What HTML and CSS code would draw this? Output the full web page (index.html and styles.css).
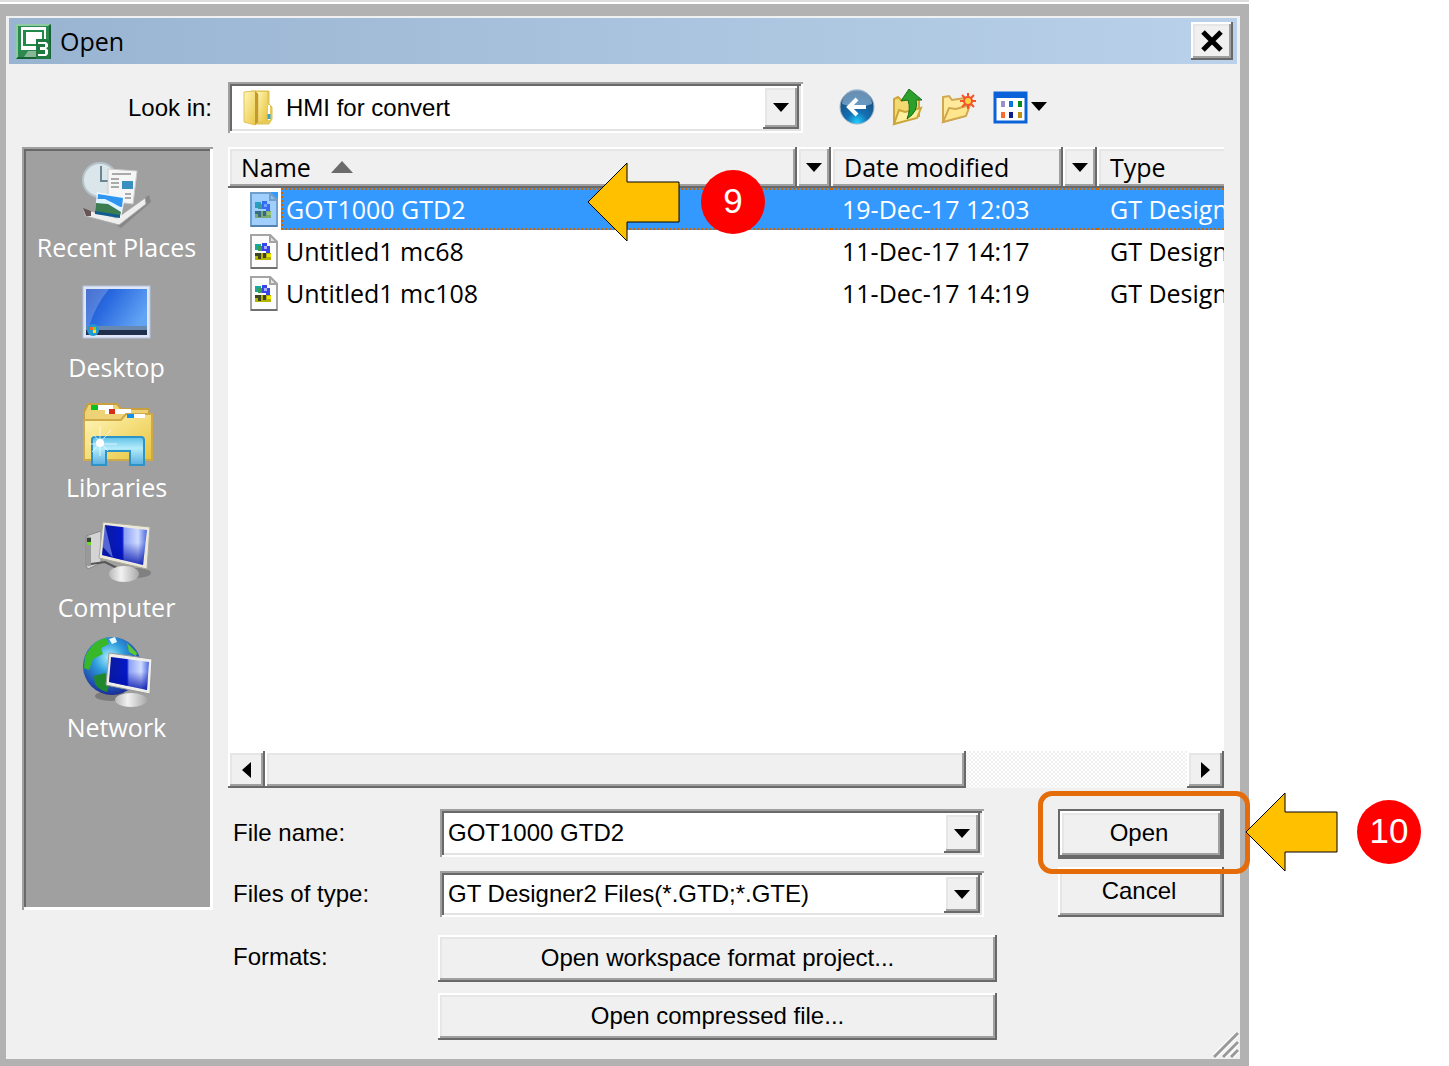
FILE: index.html
```html
<!DOCTYPE html>
<html lang="en">
<head>
<meta charset="utf-8">
<meta name="viewport" content="width=device-width, initial-scale=1">
<title>Open</title>
<link rel="stylesheet" href="styles.css">
</head>
<body>
<svg class="defs" aria-hidden="true">
  <defs>
    <linearGradient id="folder" x1="0" y1="0" x2="1" y2="1"><stop offset="0" stop-color="#fff6b8"/><stop offset="1" stop-color="#e8c33c"/></linearGradient>
    <linearGradient id="screen" x1="0" y1="0" x2="1" y2="0"><stop offset="0" stop-color="#0a1a9c"/><stop offset=".45" stop-color="#0418c8"/><stop offset=".5" stop-color="#8ca0f4"/><stop offset=".8" stop-color="#d0dcff"/><stop offset="1" stop-color="#4a68e0"/></linearGradient>
    <linearGradient id="shade" x1="0" y1="0" x2="0" y2="1"><stop offset=".45" stop-color="#0010b0" stop-opacity="0"/><stop offset="1" stop-color="#0010a8" stop-opacity=".85"/></linearGradient>
    <linearGradient id="desk" x1="0" y1="0" x2="1" y2=".5"><stop offset="0" stop-color="#1c4cc0"/><stop offset=".4" stop-color="#2a6ae0"/><stop offset="1" stop-color="#62a4f4"/></linearGradient>
    <linearGradient id="glass" x1="0" y1="0" x2="0" y2="1"><stop offset="0" stop-color="#5ec0e8"/><stop offset=".4" stop-color="#b4ecfa"/><stop offset="1" stop-color="#5aaee0"/></linearGradient>
    <radialGradient id="globe" cx=".45" cy=".35" r=".65"><stop offset="0" stop-color="#a8f0ff"/><stop offset=".4" stop-color="#2e9cdc"/><stop offset="1" stop-color="#1a2c98"/></radialGradient>
    <radialGradient id="orb" cx=".5" cy=".95" r=".9"><stop offset="0" stop-color="#20d0ff"/><stop offset=".35" stop-color="#1470b4"/><stop offset="1" stop-color="#1d4670"/></radialGradient>
    <linearGradient id="base" x1="0" y1="0" x2="1" y2="0"><stop offset="0" stop-color="#b8b8b8"/><stop offset=".4" stop-color="#f2f2f2"/><stop offset="1" stop-color="#a8a8a8"/></linearGradient>
    <symbol id="file" viewBox="0 0 28 35">
      <path d="M1 1H20L27 8V34H1Z" fill="#fcfcfc" stroke="#a4a4a4" stroke-width="2"/>
      <path d="M1 34H27" stroke="#707070" stroke-width="2"/>
      <path d="M20 1V8H27Z" fill="#e4e4e4" stroke="#a4a4a4" stroke-width="2"/>
      <path d="M5 10H11V16H5Z" fill="#14a8a0"/><path d="M8 12H14V17H8Z" fill="#3a9c50"/>
      <path d="M12 9H17V12H20V21H16V17H12Z" fill="#3a44e8"/><path d="M14 12H17V15H14Z" fill="#a0b0ff"/>
      <path d="M5 19H21V26H5Z" fill="#b4b400"/><path d="M5 19H11V25H8V22H5Z" fill="#3c4420"/><path d="M13 19H16V24H13Z" fill="#3c3c3c"/><path d="M17 20H21V23H17Z" fill="#e8e800"/>
    </symbol>
    <symbol id="down" viewBox="0 0 16 9"><path d="M0 0H16L8 9Z" fill="#000"/></symbol>
  </defs>
</svg>

<main class="window">
  <header class="titlebar">
    <svg class="app-icon" viewBox="0 0 35 35" aria-hidden="true">
      <rect width="35" height="35" rx="2" fill="#2c8a50"/><path d="M0 0H34L32 2H2V33L0 35Z" fill="#8fcca4"/><path d="M35 0V35H0L2 33H33V2Z" fill="#176334"/>
      <path d="M5 3H30V17H22V26H5Z" fill="#fff"/><path d="M7 6H28V15H22V22H7Z" fill="#1f8a4a"/><path d="M10 8H26V16H21V20H10Z" fill="#fff"/>
      <path d="M12 27H20V33H8Z" fill="#86b898"/>
      <path d="M20 15H30L34 18V35H20Z" fill="#1f7a42"/>
      <path d="M22 18H30L32 20V23L30 24L32 26V30L30 32H22V30H29V26H24V23H29V20H22Z" fill="#fff"/>
    </svg>
    <h1 class="title">Open</h1>
    <button class="btn close" type="button" aria-label="Close"><svg viewBox="0 0 22 22" width="22" height="22"><path d="M2 2L20 20M20 2L2 20" stroke="#000" stroke-width="5"/></svg></button>
  </header>

  <div class="lookin">
    <label class="lookin-label" for="folder-select">Look in:</label>
    <div class="combo combo-look">
      <svg class="folder-icon" viewBox="0 0 30 36" aria-hidden="true">
        <path d="M8 1H26V14L29 17V29L26 34H10Z" fill="#e6cb5a" stroke="#dcc050"/><path d="M14 2H24V31H14Z" fill="url(#folder)"/>
        <path d="M1 2L12 1L15 4V32L12 35L1 32Z" fill="url(#folder)" stroke="#e0c45c"/><path d="M12 1L15 4V32L12 35Z" fill="#c39a32"/>
        <path d="M26 15V30" stroke="#fff" stroke-width="2"/><path d="M26 24V29" stroke="#38a4c8" stroke-width="3"/>
      </svg>
      <select class="field" id="folder-select"><option>HMI for convert</option></select>
      <span class="btn drop" aria-hidden="true"><svg class="down"><use href="#down"/></svg></span>
    </div>
    <div class="tools">
      <button class="tool" type="button" aria-label="Back"><svg width="36" height="38" viewBox="0 0 36 38">
        <circle cx="18" cy="18" r="17" fill="url(#orb)" stroke="#9fb4c6"/><path d="M3 15A15 15 0 0 1 33 15Q18 21 3 15Z" fill="#9cc0de" opacity=".6"/>
        <path d="M27 18H12M18 10L10 18L18 26" fill="none" stroke="#fff" stroke-width="4"/></svg></button>
      <button class="tool" type="button" aria-label="Up one level"><svg width="32" height="38" viewBox="0 0 32 38">
        <path d="M2 35V10L6 8L9 11L27 9V27Z" fill="#f4d870" stroke="#cda63a" stroke-width="2"/><path d="M2 35L7 21L13 23L29 19L25 29Z" fill="#fff0a0" stroke="#cda63a" stroke-width="2"/>
        <path d="M17 0L30 11H24Q27 22 15 30Q19 20 16 11L9 12Z" fill="#2ca02c" stroke="#167016"/></svg></button>
      <button class="tool" type="button" aria-label="New folder"><svg width="35" height="38" viewBox="0 0 35 38">
        <path d="M2 33V8L8 7L11 11L24 9V27Z" fill="#ffe99a" stroke="#d0a850" stroke-width="2"/><path d="M2 33L8 19L15 20L29 16L25 27Z" fill="#ffe68c" stroke="#d0a850" stroke-width="2"/>
        <path d="M27 4V20M19 12H35M21 6L33 18M33 6L21 18" stroke="#f4512c" stroke-width="2"/><circle cx="27" cy="12" r="4" fill="#ffd040" stroke="#f4512c" stroke-width="2"/></svg></button>
      <button class="tool" type="button" aria-label="View menu"><svg width="56" height="38" viewBox="0 0 56 38">
        <rect x="2" y="4" width="31" height="29" fill="#fff" stroke="#0a62d8" stroke-width="3"/><path d="M1 3H34V9H1Z" fill="#0a62d8"/>
        <path d="M8 12H12V18H8Z" fill="#9a90c8"/><path d="M16 12H20V18H16Z" fill="#0a74e0"/><path d="M25 12H29V18H25Z" fill="#0a8a1c"/><path d="M8 23H12V29H8Z" fill="#ff6a30"/><path d="M16 23H20V29H16Z" fill="#0a1e90"/><path d="M25 23H29V29H25Z" fill="#c09010"/>
        <path d="M38 13H54L46 22Z" fill="#000"/></svg></button>
    </div>
  </div>

  <div class="main">
    <nav class="places" aria-label="Places">
      <a class="place" href="#recent"><svg class="place-icon" viewBox="0 0 72 76" aria-hidden="true">
        <path d="M30 66L68 39L70 46L40 72Z" fill="#777" opacity=".6"/>
        <circle cx="19" cy="24" r="17" fill="#dbe6ea" stroke="#b4c4cc" stroke-width="2"/><path d="M20 10V25H28" stroke="#6a8494" stroke-width="2" fill="none"/>
        <path d="M27 13L56 15L52 48L27 45Z" fill="#f6f6f6" stroke="#ccc"/><path d="M31 18H50M30 23H38M30 27H38M30 31H38M44 38H50M44 42H50" stroke="#aaa" stroke-width="2"/><path d="M41 25H52V33H41Z" fill="#3a90c0"/>
        <path d="M2 53L36 62L64 42L65 48L38 69L4 60Z" fill="#eee" stroke="#aaa"/><path d="M2 52L10 55V60H5Z" fill="#655"/>
        <path d="M16 36L44 41L40 62L14 57Z" fill="#eef6ff"/><path d="M17 38L42 42L41 51L16 49Z" fill="#2e96f0"/><path d="M16 43L24 43L32 47L41 52V55L15 54Z" fill="#e0f4ff"/><path d="M15 47L27 48L40 56L39 60L14 56Z" fill="#3c7c50"/><path d="M14 55L39 59V62L14 58Z" fill="#105c90"/>
      </svg><span>Recent Places</span></a>
      <a class="place" href="#desktop"><svg class="place-icon" viewBox="0 0 72 76" aria-hidden="true">
        <rect x="2" y="10" width="67" height="52" fill="#dfe6f6" stroke="#b4c4e4"/><rect x="5" y="13" width="61" height="46" fill="url(#desk)"/><path d="M5 13H28Q14 30 8 51H5Z" fill="#fff" opacity=".2"/>
        <path d="M5 50H66V59H5Z" fill="#20304c"/><path d="M5 50H66V54H5Z" fill="#6888b0"/><circle cx="12" cy="54" r="6" fill="#2498d0"/><path d="M9 51H12V54H9Z" fill="#f46820"/><path d="M12 51H15V54H12Z" fill="#80d020"/><path d="M12 54H15V57H12Z" fill="#ffe020"/>
      </svg><span>Desktop</span></a>
      <a class="place" href="#libraries"><svg class="place-icon" viewBox="0 0 72 76" aria-hidden="true">
        <path d="M3 16L7 8H36L40 13H68V64H3Z" fill="#eed376" stroke="#c8a040" stroke-width="2"/><path d="M10 9H32V14H10Z" fill="#fff"/><path d="M10 9H17V14H10Z" fill="#08c020"/><path d="M24 13H50V18H24Z" fill="#fff"/><path d="M28 13H34V18H28Z" fill="#d43018"/>
        <path d="M3 24H40L45 18H71V64H3Z" fill="url(#folder)" stroke="#d0aa48" stroke-width="2"/><path d="M46 18H64V22H46Z" fill="#fff"/><path d="M46 18H53V22H46Z" fill="#1090f0"/>
        <path d="M11 44Q11 41 14 41H60Q63 41 63 44V69H49V55H25V69H11Z" fill="url(#glass)" stroke="#2e94c8" stroke-width="2"/><path d="M19 30V60M8 48H36M11 56L30 34M12 38L27 55" stroke="#fff" opacity=".7"/><circle cx="19" cy="47" r="4" fill="#fff"/>
      </svg><span>Libraries</span></a>
      <a class="place" href="#computer"><svg class="place-icon" viewBox="0 0 72 76" aria-hidden="true">
        <path d="M5 20L20 15V47L7 53L5 50Z" fill="#d4d4d4" stroke="#888"/><path d="M5 20L10 21V50H5Z" fill="#999"/><path d="M6 22H10V26H6Z" fill="#343"/><path d="M6 26H10V29H6Z" fill="#6bdc1c"/><path d="M10 48L24 46L36 52" fill="none" stroke="#555" stroke-width="2"/>
        <ellipse cx="55" cy="57" rx="15" ry="5" fill="#606060" opacity=".5"/><ellipse cx="43" cy="58" rx="15" ry="8" fill="url(#base)"/>
        <path d="M22 6L69 11L66 53L18 42Z" fill="#ece9dc" stroke="#aaa898"/><path d="M24 9L66 14L62 49L21 39Z" fill="url(#screen)"/><path d="M24 9L66 14L62 49L21 39Z" fill="url(#shade)"/><path d="M24 9L21 30L32 42Z" fill="#a0b4ff" opacity=".5"/>
      </svg><span>Computer</span></a>
      <a class="place" href="#network"><svg class="place-icon" viewBox="0 0 72 76" aria-hidden="true">
        <ellipse cx="30" cy="60" rx="16" ry="5" fill="#555" opacity=".5"/><circle cx="31" cy="30" r="29" fill="url(#globe)"/>
        <path d="M4 21Q12 4 25 2L28 8L20 12L22 18L12 23L8 34L3 32Z" fill="#38b828"/><path d="M13 40L24 37L30 44L26 56Q18 54 14 48Z" fill="#20882c"/><path d="M46 7L56 17L55 20L48 16Z" fill="#5cc830"/><path d="M28 3L34 1L36 6L31 8Z" fill="#e8f8ff"/>
        <ellipse cx="50" cy="64" rx="16" ry="7" fill="url(#base)"/>
        <path d="M28 17L71 23L69 58L25 49Z" fill="#eeeeea" stroke="#999"/><path d="M30 21L68 26L66 54L28 46Z" fill="url(#screen)"/><path d="M30 21L68 26L66 54L28 46Z" fill="url(#shade)"/>
      </svg><span>Network</span></a>
    </nav>

    <div class="content">
      <section class="list" aria-label="Files">
        <div class="list-view">
          <table class="files">
            <colgroup><col class="c-name"><col class="c-date"><col class="c-type"></colgroup>
            <thead>
              <tr>
                <th><div class="head"><button class="btn head-btn" type="button">Name <svg class="sort" viewBox="0 0 22 12"><path d="M11 0L22 12H0Z" fill="#6b6b6b"/></svg></button><button class="btn head-drop" type="button" aria-label="Name filter"><svg class="down"><use href="#down"/></svg></button></div></th>
                <th><div class="head"><button class="btn head-btn" type="button">Date modified</button><button class="btn head-drop" type="button" aria-label="Date filter"><svg class="down"><use href="#down"/></svg></button></div></th>
                <th><div class="head"><button class="btn head-btn head-last" type="button">Type</button></div></th>
              </tr>
            </thead>
            <tbody>
              <tr class="selected">
                <td class="name"><div class="name-cell"><span class="file-box"><svg class="file-icon"><use href="#file"/></svg></span><span class="file-name">GOT1000 GTD2</span>
                  <span class="note note-select"><svg class="arrow" viewBox="0 0 93 80"><path d="M1 40L40 1V20H92V60H40V79Z" fill="#ffc000" stroke="#000"/></svg><span class="step">9</span></span></div></td>
                <td>19-Dec-17 12:03</td><td>GT Design</td>
              </tr>
              <tr>
                <td class="name"><div class="name-cell"><span class="file-box"><svg class="file-icon"><use href="#file"/></svg></span><span class="file-name">Untitled1 mc68</span></div></td>
                <td>11-Dec-17 14:17</td><td>GT Design</td>
              </tr>
              <tr>
                <td class="name"><div class="name-cell"><span class="file-box"><svg class="file-icon"><use href="#file"/></svg></span><span class="file-name">Untitled1 mc108</span></div></td>
                <td>11-Dec-17 14:19</td><td>GT Design</td>
              </tr>
            </tbody>
          </table>
        </div>
        <div class="scrollbar">
          <button class="btn scroll-btn" type="button" aria-label="Scroll left"><svg width="9" height="16" viewBox="0 0 9 16"><path d="M9 0V16L0 8Z"/></svg></button>
          <div class="track"><div class="btn thumb"></div></div>
          <button class="btn scroll-btn" type="button" aria-label="Scroll right"><svg width="9" height="16" viewBox="0 0 9 16"><path d="M0 0V16L9 8Z"/></svg></button>
        </div>
      </section>

      <form class="form">
        <div class="fields">
          <label for="file-name">File name:</label>
          <div class="combo"><input class="field" id="file-name" type="text" value="GOT1000 GTD2"><button class="btn drop" type="button" aria-label="Recent names"><svg class="down"><use href="#down"/></svg></button></div>
          <label for="file-type">Files of type:</label>
          <div class="combo"><select class="field" id="file-type"><option>GT Designer2 Files(*.GTD;*.GTE)</option></select><span class="btn drop" aria-hidden="true"><svg class="down"><use href="#down"/></svg></span></div>
          <span class="formats-label">Formats:</span>
          <div class="formats"><button class="btn" type="button">Open workspace format project...</button><button class="btn" type="button">Open compressed file...</button></div>
        </div>
        <div class="actions">
          <div class="open-wrap">
            <button class="btn open" type="button">Open</button>
            <span class="ring"></span>
            <span class="note note-open"><svg class="arrow" viewBox="0 0 93 80"><path d="M1 40L40 1V20H92V60H40V79Z" fill="#ffc000" stroke="#000"/></svg><span class="step">10</span></span>
          </div>
          <button class="btn cancel" type="button">Cancel</button>
        </div>
      </form>
    </div>
  </div>
  <svg class="grip" viewBox="0 0 26 26" aria-hidden="true"><path d="M1 25L25 1M10 25L25 10M18 25L25 18" stroke="#fff" stroke-width="5"/><path d="M1 25L25 1M10 25L25 10M18 25L25 18" stroke="#999" stroke-width="3"/></svg>
</main>
</body>
</html>
```

FILE: styles.css
```css
* { box-sizing: border-box; }

body {
  margin: 0;
  min-height: 100vh;
  display: flex;
  background: #fff;
  color: #000;
  font: 24px/30px "Liberation Sans", Arial, sans-serif;
}

.defs { position: absolute; width: 0; height: 0; }

button, input, select { font: inherit; color: inherit; margin: 0; padding: 0; border: 0; border-radius: 0; }
button { cursor: pointer; }
svg { display: block; flex: none; }

/* Window frame */
.window {
  position: relative;
  flex: 1;
  min-width: 0;
  margin-right: 200px;
  display: flex;
  flex-direction: column;
  background: #f0f0f0;
  border: solid #b2b2b2;
  border-width: 12px 9px 7px 6px;
  margin-top: 4px;
  padding: 2px 3px 19px;
}
.window::before {
  content: "";
  position: absolute;
  inset: -16px -9px auto -6px;
  height: 2px;
  background: #ddd;
}

.btn {
  display: flex;
  align-items: center;
  justify-content: center;
  background: #f0f0f0;
  box-shadow: inset -2px -2px #696969, inset 2px 2px #fff, inset -4px -4px #a0a0a0, inset 4px 4px #e6e6e6;
}

.titlebar {
  display: flex;
  align-items: center;
  height: 46px;
  padding: 0 4px 0 7px;
  background: linear-gradient(90deg, #99b4d1, #b9d1ea);
}
.app-icon { width: 35px; height: 35px; }
.title { flex: 1; margin: 0 0 0 9px; font: 25px/30px "Open Sans", "Noto Sans", sans-serif; }
.close { width: 42px; height: 38px; }

/* Folder selector and toolbar */
.lookin {
  display: flex;
  align-items: center;
  margin: 18px 13px 14px;
}
.lookin-label { width: 206px; padding-right: 16px; text-align: right; }

.combo {
  display: flex;
  align-items: center;
  min-width: 0;
  padding: 4px;
  background: #fff;
  box-shadow: inset 2px 2px #a0a0a0, inset -2px -2px #fff, inset 4px 4px #696969, inset -4px -4px #e3e3e3;
}
.combo-look { flex: 0 1 575px; height: 51px; }
.folder-icon { width: 30px; height: 36px; margin-left: 11px; }
.combo-look .field { padding-left: 13px; }
.field {
  flex: 1;
  min-width: 0;
  height: 100%;
  padding-left: 4px;
  background: transparent;
  appearance: none;
  outline: 0;
}
.drop { width: 36px; align-self: stretch; pointer-events: none; }
.down { width: 16px; height: 9px; }
.tools { display: flex; gap: 17px; margin-left: 36px; }
.tool { background: none; }

/* Sidebar */
.main { flex: 1; display: flex; gap: 15px; padding: 0 13px; }
.places {
  flex: 0 0 191px;
  margin-bottom: 130px;
  padding: 9px 6px 9px 4px;
  display: flex;
  flex-direction: column;
  gap: 14px;
  background: #a0a0a0;
  box-shadow: inset 2px 2px #a0a0a0, inset -3px -3px #fff, inset 4px 4px #696969;
}
.place {
  display: flex;
  flex-direction: column;
  align-items: center;
  color: #fff;
  text-decoration: none;
  font: 25px/30px "Open Sans", "Noto Sans", sans-serif;
}
.place-icon { width: 72px; height: 76px; overflow: visible; }

/* File list */
.content { flex: 1; min-width: 0; display: flex; flex-direction: column; }
.list { flex: 1; display: flex; flex-direction: column; background: #fff; font: 25px/30px "Open Sans", "Noto Sans", sans-serif; }
.list-view { flex: 1; overflow: hidden; }
.files { width: 100%; table-layout: fixed; border-collapse: separate; border-spacing: 0; }
.c-date { width: 266px; }
.c-type { width: 127px; }
.files th, .files td { padding: 0; font-weight: 400; text-align: left; white-space: nowrap; }
.head { display: flex; height: 41px; }
.head-btn { flex: 1; justify-content: flex-start; gap: 20px; padding: 0 0 2px 13px; }
.head-last { margin-right: -4px; }
.head-drop { width: 34px; }
.sort { width: 22px; height: 12px; }
.files td { height: 42px; padding-left: 11px; overflow: hidden; line-height: 38px; }
.files td:last-child { padding-left: 13px; }
.files td.name { padding: 0; overflow: visible; }
.name-cell { position: relative; display: flex; height: 42px; align-items: center; }
.file-box { width: 53px; padding-left: 22px; }
.file-icon { width: 28px; height: 35px; }
.file-name { flex: 1; padding-left: 5px; }
.selected { color: #fff; }
.selected .file-name, .selected td:not(.name) {
  background: #3399ff;
  border: dotted #cc6600;
  border-width: 2px 0;
}
.selected .file-name { border-left-width: 2px; padding-left: 3px; }
.selected .file-icon { background: #3399ff; }
.selected .file-icon use { opacity: .55; }

.scrollbar { display: flex; height: 37px; }
.scroll-btn { width: 37px; }
.track { flex: 1; display: flex; background: repeating-conic-gradient(#fff 0 25%, #f0f0f0 0 50%) 0 0 / 4px 4px; }
.thumb { width: 76%; }

/* Bottom form */
.form { display: flex; justify-content: space-between; margin-top: 21px; }
.fields {
  flex: 0 1 769px;
  min-width: 0;
  display: grid;
  grid-template-columns: 205px 1fr;
  column-gap: 5px;
  grid-template-rows: 48px 46px auto;
  row-gap: 14px;
  align-items: center;
}
.fields label, .formats-label { padding-left: 5px; }
.fields .combo { height: 100%; margin: 0 13px 0 2px; }
.formats-label { align-self: start; padding-top: 11px; }
.formats { display: grid; gap: 11px; padding-top: 4px; }
.formats .btn { height: 47px; padding-bottom: 2px; }
.actions { width: 166px; }
.open-wrap { position: relative; }
.open { width: 100%; height: 50px; border: 2px solid #696969; }
.cancel { width: 100%; height: 50px; margin-top: 8px; }
.actions .btn { padding: 0 4px 2px 0; }

.grip { position: absolute; right: 1px; bottom: 1px; width: 26px; height: 26px; }

/* Callouts laid over the window */
.ring { position: absolute; inset: -18px -26px -15px -20px; border: 5px solid #e46c0a; border-radius: 14px; pointer-events: none; }
.note { position: absolute; display: flex; align-items: center; gap: 21px; pointer-events: none; }
.note-select { left: 359px; top: -26px; }
.note-open { left: 187px; top: -17px; gap: 19px; }
.arrow { width: 93px; height: 80px; }
.step {
  width: 64px;
  height: 64px;
  border-radius: 50%;
  background: #f00;
  color: #fff;
  font: 35px/62px "Liberation Sans", Arial, sans-serif;
  text-align: center;
}
```
